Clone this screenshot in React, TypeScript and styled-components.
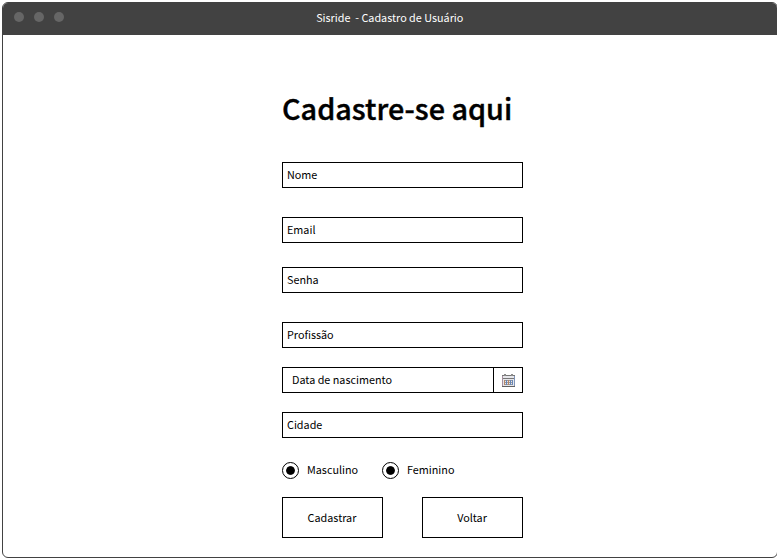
import React from "react";
import styled, { createGlobalStyle } from "styled-components";

const GlobalStyle = createGlobalStyle`
  * { box-sizing: border-box; }
  html, body { margin: 0; background: #fff; overflow: hidden; }
  body {
    font-family: "Noto Sans CJK SC", "Noto Sans", sans-serif;
    font-size: 10.8px;
    line-height: 16px;
    color: #000;
  }
`;

const Window = styled.main`
  width: 776px;
  height: 556px;
  margin: 2px 0 0 2px;
  border: 1px solid #424242;
  border-radius: 6px;
  overflow: hidden;
  background: #fff;
`;

const TitleBar = styled.header`
  display: grid;
  grid-template-columns: 1fr auto 1fr;
  align-items: center;
  height: 32px;
  padding-left: 10.5px;
  background: #424242;
  color: #fff;
`;

const Dots = styled.div`
  display: flex;
  gap: 10px;
  margin-top: -4px;
`;

const Dot = styled.span`
  width: 10px;
  height: 10px;
  border-radius: 50%;
  background: #666;
`;

const Title = styled.span`
  white-space: pre;
  margin: -4px 11px 0 0;
`;

const Form = styled.form`
  display: flex;
  flex-direction: column;
  width: 241px;
  margin-left: 279px;
`;

const Heading = styled.h1`
  margin: 49px 0 30px;
  height: 48px;
  font-size: 28.8px;
  line-height: 48px;
  font-weight: 500;
  -webkit-text-stroke: 0.4px #000;
  white-space: nowrap;
`;

const Field = styled.div<{ $after: number; $inset?: number }>`
  display: flex;
  justify-content: space-between;
  height: 26px;
  margin-bottom: ${(p) => p.$after}px;
  padding-left: ${(p) => p.$inset ?? 4}px;
  border: 1px solid #000;
  line-height: 22px;
`;

const CalendarButton = styled.span`
  display: flex;
  align-items: center;
  justify-content: center;
  width: 29px;
  border-left: 1px solid #000;
`;

const Options = styled.div`
  display: flex;
  height: 17px;
  margin-bottom: 18px;
`;

const Option = styled.label`
  display: flex;
  width: 100px;
  gap: 8px;
  line-height: 15px;
`;

const Radio = styled.span`
  display: grid;
  place-items: center;
  width: 17px;
  height: 17px;
  border: 1px solid #000;
  border-radius: 50%;
  &::after {
    content: "";
    width: 8px;
    height: 8px;
    border-radius: 50%;
    background: #000;
    box-shadow: 0 0 0 0.3px #000;
    transform: translate(-0.5px, -0.5px);
  }
`;

const Actions = styled.div`
  display: flex;
  justify-content: space-between;
`;

const Button = styled.button`
  width: 101px;
  height: 41px;
  padding: 0 1px 2px 0;
  border: 1px solid #000;
  background: #fff;
  color: #000;
  font: inherit;
`;

const CalendarIcon = () => (
  <svg width="15" height="15" viewBox="0 0 15 15" shapeRendering="crispEdges">
    <path d="M1 2h13v12H1z" fill="#e6e6ea" />
    <path d="M1 2h13v1H1zM1 5h13v1H1z" fill="#777" />
    <path d="M1 3h1v10H1z" fill="#a58f9f" />
    <path d="M13 3h1v10h-1z" fill="#7f94b8" />
    <path d="M1 13h13v1H1z" fill="#606060" />
    <path d="M3 1h2v2H3zM10 1h2v2h-2z" fill="#8b8b8b" />
    <path d="M3 7h9v1H3zM3 9h9v1H3zM3 11h9v1H3z" fill="#999" />
    <path d="M3 7h1v5H3zM7 7h1v5H7z" fill="#b98868" />
    <path d="M5 7h1v5H5zM9 7h1v5H9zM11 7h1v5h-1z" fill="#6686b8" />
  </svg>
);

export default function App() {
  return (
    <>
      <GlobalStyle />
      <Window>
        <TitleBar>
          <Dots>
            <Dot />
            <Dot />
            <Dot />
          </Dots>
          <Title>{"Sisride  - Cadastro de Usuário"}</Title>
        </TitleBar>
        <Form onSubmit={(e) => e.preventDefault()}>
          <Heading>Cadastre-se aqui</Heading>
          <Field $after={29}>Nome</Field>
          <Field $after={24}>Email</Field>
          <Field $after={29}>Senha</Field>
          <Field $after={19}>Profissão</Field>
          <Field $after={19} $inset={9}>
            Data de nascimento
            <CalendarButton>
              <CalendarIcon />
            </CalendarButton>
          </Field>
          <Field $after={24}>Cidade</Field>
          <Options>
            <Option>
              <Radio />
              Masculino
            </Option>
            <Option>
              <Radio />
              Feminino
            </Option>
          </Options>
          <Actions>
            <Button type="submit">Cadastrar</Button>
            <Button type="button">Voltar</Button>
          </Actions>
        </Form>
      </Window>
    </>
  );
}
